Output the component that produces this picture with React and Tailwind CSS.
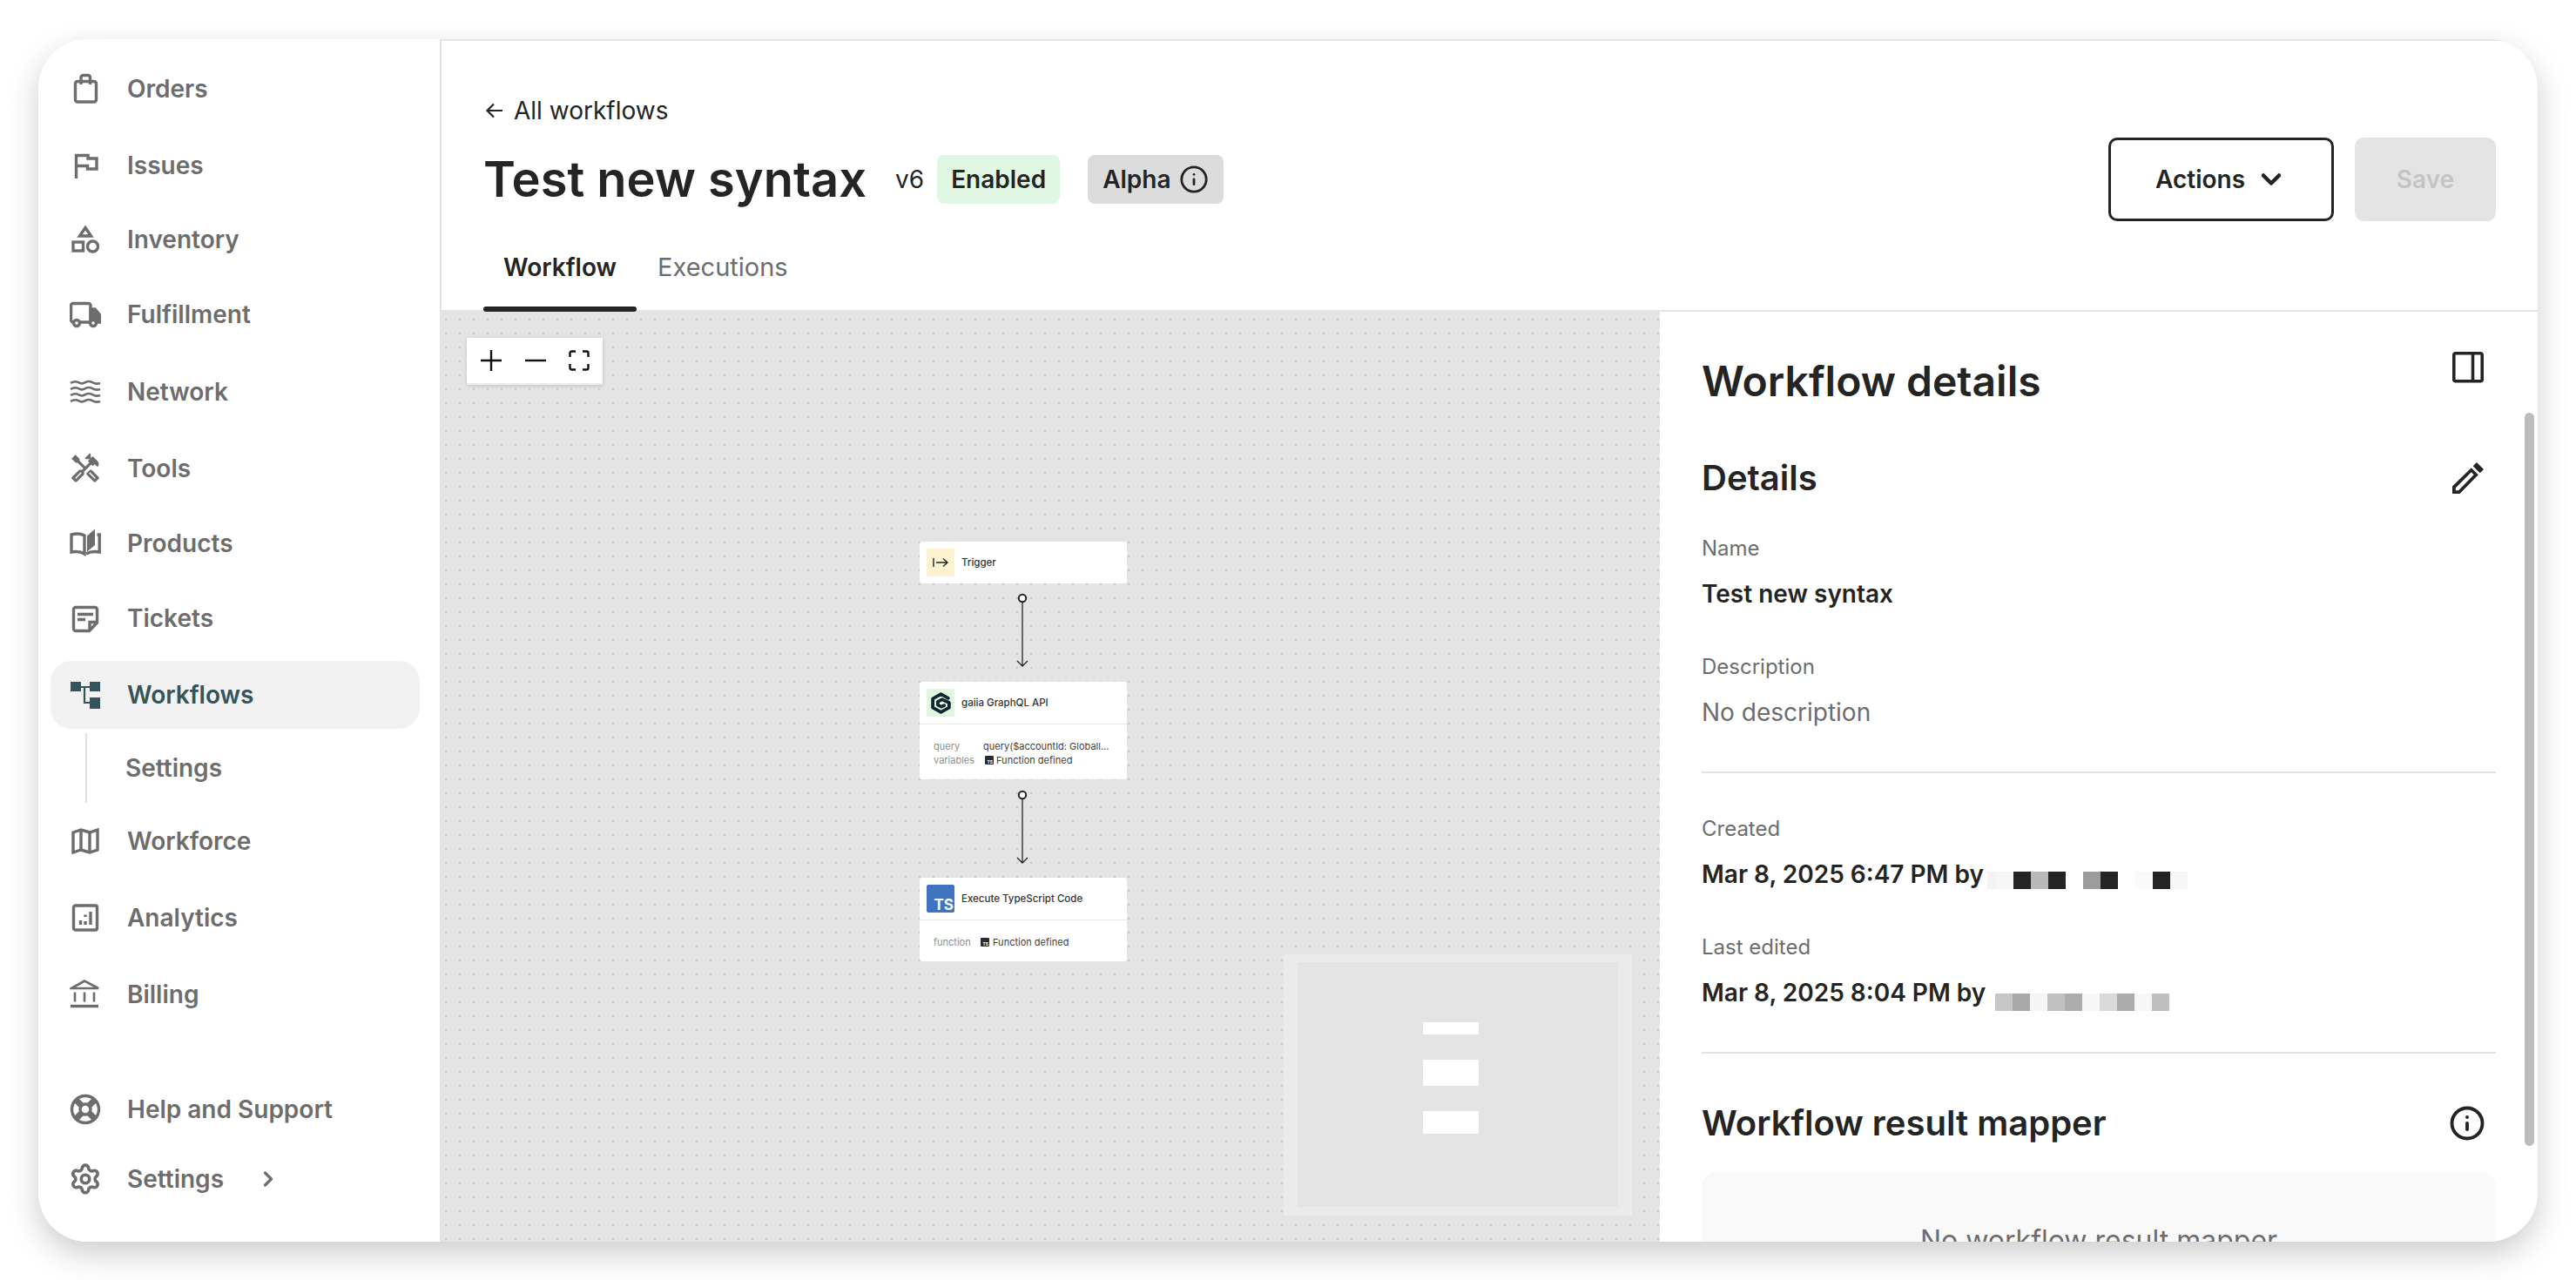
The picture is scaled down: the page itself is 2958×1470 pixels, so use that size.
import React from "react";
import { Settings as Gear, ChevronRight, ChevronDown, Info } from "lucide-react";
import { MdOutlineHandyman } from "react-icons/md";

const G = "#6d6d6d";
const S = ({ children, color = G }) => (
  <svg width="36" height="36" viewBox="0 0 36 36" fill="none" stroke={color} strokeWidth="3.400" className="shrink-0">
    {children}
  </svg>
);

const icons = {
  orders: (
    <S>
      <rect x="6.500" y="9.500" width="24" height="23.500" rx="2.500" />
      <path d="M13 13V5a2.500 2.500 0 0 1 2.500-2.500h5.500A2.500 2.500 0 0 1 23.500 5v8" />
    </S>
  ),
  issues: (
    <S>
      <path d="M7.500 33V6.500H21V10H31V22H20.500V18.500H7.500" />
    </S>
  ),
  inventory: (
    <S>
      <path d="M18 4.500 24.500 14h-13Z" />
      <rect x="4" y="21" width="11.500" height="10" />
      <circle cx="26.500" cy="26" r="6" />
    </S>
  ),
  truck: (
    <S>
      <path d="M5 27H4A2.500 2.500 0 0 1 1.500 24.500V8A2.500 2.500 0 0 1 4 5.500H21.500A2.500 2.500 0 0 1 24 8V27H11" />
      <path d="M24 12h5l5.500 6.500V27h-2.500H24Z" fill={G} />
      <circle cx="8" cy="28" r="3.500" fill="#fff" />
      <circle cx="27" cy="28" r="3.500" fill="#fff" />
    </S>
  ),
  network: (
    <S>
      {[8, 15, 22, 29].map((y) => (
        <path key={y} strokeWidth="2.600" d={`M1 ${y}c4-2.500 6-2.500 9-.8s5 1.800 8 0 5-1.700 8 0 5 2 9 .8`} />
      ))}
    </S>
  ),
  tools: <MdOutlineHandyman size={38} color={G} className="shrink-0 -mx-px" />,
  products: (
    <S>
      <path d="M2 28V8C7 6.500 13 6.800 17 9V30C13 27.500 7 27 2 28Z" />
      <path d="M20 9.500 29 1.500V20L20 27.500Z" fill={G} stroke="none" />
      <path d="M31.500 8H34.200V28C29 27 23 27.500 19 30" />
    </S>
  ),
  tickets: (
    <S>
      <path d="M7 5.500H29A2.500 2.500 0 0 1 31.500 8V23L22.500 32.500H7A2.500 2.500 0 0 1 4.500 30V8A2.500 2.500 0 0 1 7 5.500Z" />
      <path d="M9 13.500H27M9 19.500H18M31 22.500H23V32" />
    </S>
  ),
  workflows: (
    <S color="#34545c">
      <path fill="#34545c" stroke="none" d="M1 3h12v11H1zM23 3h12v11H23zM23 21h12v13H23z" />
      <path strokeWidth="2.200" d="M13 9H23M17 9V27H23" />
    </S>
  ),
  workforce: (
    <S>
      <path d="M4 8 13 5l10 3 9-3V28l-9 3-10-3-9 3Z" />
      <path d="M13 5V28M23 8V31" />
    </S>
  ),
  analytics: (
    <S>
      <rect x="4.500" y="4" width="27" height="28" rx="2" />
      <path d="M12.500 21v5M18 14.500V17M18 22v4M24 11v15" />
    </S>
  ),
  billing: (
    <S>
      <path strokeWidth="2.600" d="M2 11 17 2.500 33 11ZM6 15.500v11M17 15.500v11M28 15.500v11" />
      <path d="M1 31.500H33" />
    </S>
  ),
  help: (
    <S>
      <circle cx="18" cy="18" r="15.500" />
      <circle cx="18" cy="18" r="6" />
      <path strokeWidth="7" d="M7 7 13.500 13.500M29 7 22.500 13.500M7 29 13.500 22.500M29 29 22.500 22.500" />
    </S>
  ),
  settings: <Gear size={38} strokeWidth={2.300} color={G} className="shrink-0 -mx-px" />,
};

function NavRow({ icon, label, cls, active, extra }) {
  return (
    <div className={`flex items-center gap-[30px] pl-[22px] ${cls} ${active ? "rounded-[24px] bg-[#f2f2f2] text-[#34545c]" : "text-[#6d6d6d]"}`}>
      {icons[icon]}
      <span className="text-[28px] font-semibold leading-none">{label}</span>
      {extra}
    </div>
  );
}

function Sidebar() {
  return (
    <aside className="flex w-[461px] shrink-0 flex-col pl-[14px] pr-[23px] pt-[13px] pb-[32px]">
      <NavRow icon="orders" label="Orders" cls="h-[88px]" />
      <NavRow icon="issues" label="Issues" cls="h-[87px]" />
      <NavRow icon="inventory" label="Inventory" cls="h-[83px]" />
      <NavRow icon="truck" label="Fulfillment" cls="h-[90px]" />
      <NavRow icon="network" label="Network" cls="h-[87px]" />
      <NavRow icon="tools" label="Tools" cls="h-[90px]" />
      <NavRow icon="products" label="Products" cls="h-[82px]" />
      <NavRow icon="tickets" label="Tickets" cls="h-[90px]" />
      <NavRow icon="workflows" label="Workflows" cls="mt-[4px] h-[78px]" active />
      <div className="mb-[2px] ml-[40px] mt-[5px] flex h-[80px] items-center border-l-2 border-[#e0e0e0] pl-[44px]">
        <span className="text-[28px] font-semibold leading-none text-[#6d6d6d]">Settings</span>
      </div>
      <NavRow icon="workforce" label="Workforce" cls="h-[84px]" />
      <NavRow icon="analytics" label="Analytics" cls="h-[92px]" />
      <NavRow icon="billing" label="Billing" cls="h-[84px]" />
      <div className="flex-1" />
      <NavRow icon="help" label="Help and Support" cls="h-[80px]" />
      <NavRow
        icon="settings"
        label="Settings"
        cls="h-[80px]"
        extra={<ChevronRight size={28} strokeWidth={2.800} className="ml-[7px]" />}
      />
    </aside>
  );
}

function Header() {
  return (
    <header className="h-[311px] shrink-0 border-b-2 border-[#e4e4e4] pl-[48px] pr-[48px] pt-[60px] text-[#242424]">
      <div className="flex h-[40px] items-center text-[28px] leading-none">
        <svg width="24" height="24" viewBox="0 0 24 24" fill="none" stroke="#242424" strokeWidth="2.200" className="ml-px mr-[10px]">
          <path d="M21 12H4M11 4.500 3.500 12l7.500 7.500" />
        </svg>
        All workflows
      </div>
      <div className="mt-[11px] flex h-[96px] items-center">
        <h1 className="text-[56px] font-semibold leading-none">Test new syntax</h1>
        <span className="ml-[33px] text-[28px] leading-none">v6</span>
        <span className="ml-[15px] flex h-[56px] items-center rounded-[8px] bg-[#dff7e3] px-[16px] text-[28px] font-semibold">Enabled</span>
        <span className="ml-[32px] flex h-[56px] items-center gap-[9px] rounded-[8px] bg-[#dcdcdc] px-[17px] text-[28px] font-semibold">
          Alpha <Info size={34} strokeWidth={2} />
        </span>
        <button className="ml-auto flex h-[96px] w-[259px] items-center justify-center gap-[12px] rounded-[10px] border-[3px] border-[#242424] text-[28px] font-semibold">
          Actions <ChevronDown size={36} strokeWidth={3} />
        </button>
        <button className="ml-[24px] h-[96px] w-[162px] rounded-[10px] bg-[#e4e4e4] text-[28px] font-semibold text-[#c4c4c4]">Save</button>
      </div>
      <div className="-mb-[2px] flex">
        <div className="flex flex-col px-[23px] pt-[33px]">
          <span className="h-[40px] text-[28px] font-semibold leading-[40px]">Workflow</span>
          <div className="-mx-[23px] mt-[25px] h-[6px] rounded-full bg-[#242424]" />
        </div>
        <div className="px-[24px] pt-[33px]">
          <span className="block h-[40px] text-[29px] leading-[40px] text-[#6d6d6d]">Executions</span>
        </div>
      </div>
    </header>
  );
}

const TsMini = () => (
  <span className="relative block h-[10px] w-[10px] shrink-0 rounded-[1px] bg-[#2b2b2b]">
    <span className="absolute bottom-0 right-[1px] text-[5px] font-bold leading-[6px] text-white">TS</span>
  </span>
);

function Connector({ top }) {
  return (
    <svg className="absolute left-[660px]" style={{ top }} width="14" height="86" viewBox="0 0 14 86" fill="none" stroke="#242424">
      <circle cx="7" cy="6" r="4.200" strokeWidth="2" fill="#fff" />
      <path d="M7 10V84M1 78l6 6 6-6" strokeWidth="1.300" />
    </svg>
  );
}

function NodeHead({ icon, label }) {
  return (
    <div className="flex h-[48px] items-center gap-[8px] px-[8px]">
      {icon}
      <span className="pt-[1px] text-[11.500px] font-medium leading-none text-[#333]">{label}</span>
    </div>
  );
}

function Canvas() {
  return (
    <section className="relative w-[1399px] shrink-0 overflow-hidden bg-[#e4e4e4] bg-[radial-gradient(circle,#cbcbcb_0.7px,transparent_1px)] bg-[length:16px_16px] bg-[position:-3px_1px]">
      <div className="absolute left-[29px] top-[30px] flex h-[54px] w-[156px] items-center justify-around border-b-2 border-[#ececec] bg-white px-[2px] shadow-[0_1px_4px_rgba(0,0,0,0.15)]">
        <svg width="26" height="26" viewBox="0 0 26 26" stroke="#111" strokeWidth="2.400"><path d="M13 1V25M1 13H25" /></svg>
        <svg width="26" height="26" viewBox="0 0 26 26" stroke="#111" strokeWidth="2.400"><path d="M1 13H25" /></svg>
        <svg width="24" height="24" viewBox="0 0 24 24" fill="none" stroke="#111" strokeWidth="2.400"><path d="M1.500 8V3.500a2 2 0 0 1 2-2H8M16 1.500h4.500a2 2 0 0 1 2 2V8M22.500 16v4.500a2 2 0 0 1-2 2H16M8 22.500H3.500a2 2 0 0 1-2-2V16" /></svg>
      </div>

      <div className="absolute left-[549px] top-[264px] h-[48px] w-[238px] rounded-[3px] bg-white">
        <NodeHead
          label="Trigger"
          icon={
            <span className="flex h-[32px] w-[32px] items-center justify-center rounded-[2px] bg-[#fdf3d0]">
              <svg width="18" height="12" viewBox="0 0 18 12" fill="none" stroke="#222" strokeWidth="1.400"><path d="M1 1V11M4 6H17M12 1.500 17 6l-5 4.500" /></svg>
            </span>
          }
        />
      </div>
      <Connector top="323px" />

      <div className="absolute left-[549px] top-[425px] h-[112px] w-[238px] rounded-[3px] bg-white">
        <NodeHead
          label="gaiia GraphQL API"
          icon={
            <span className="flex h-[32px] w-[32px] items-center justify-center rounded-[2px] bg-[#dff7e3]">
              <svg width="25" height="25" viewBox="0 0 24 24" fill="none" stroke="#10272f" strokeWidth="3.600" strokeLinecap="round" strokeLinejoin="round">
                <path d="M20 6.500 12 2 3 7v10l9 5 9-5v-5.500L13 8l-4.500 2.500v3.500l4 2 3-1.500" />
              </svg>
            </span>
          }
        />
        <div className="flex flex-col border-t border-[#e8e8e8] pl-[16px] pt-[17px] text-[11px] leading-[16px]">
          <div className="flex">
            <span className="w-[57px] text-[#8d8d8d]">query</span>
            <span className="text-[#3e3e3e]">query($accountId: Globall...</span>
          </div>
          <div className="flex items-center">
            <span className="w-[59px] text-[#8d8d8d]">variables</span>
            <TsMini />
            <span className="ml-[3px] text-[#3e3e3e]">Function defined</span>
          </div>
        </div>
      </div>
      <Connector top="549px" />

      <div className="absolute left-[549px] top-[650px] h-[96px] w-[238px] rounded-[3px] bg-white">
        <NodeHead
          label="Execute TypeScript Code"
          icon={
            <span className="relative block h-[32px] w-[32px] rounded-[2px] bg-[#4273bf]">
              <span className="absolute bottom-0 right-[1px] text-[17px] font-bold leading-[17px] text-white">TS</span>
            </span>
          }
        />
        <div className="flex h-[48px] items-center border-t border-[#e8e8e8] pl-[16px] pt-[2px] text-[11px] leading-[16px]">
          <span className="w-[54px] text-[#8d8d8d]">function</span>
          <TsMini />
          <span className="ml-[4px] text-[#3e3e3e]">Function defined</span>
        </div>
      </div>

      <div className="absolute left-[967px] top-[738px] flex h-[300px] w-[400px] flex-col items-center border-x-[16px] border-b-[10px] border-t-[9px] border-[#ebebeb] bg-[#e4e4e4] pr-[16px] pt-[69px]">
        <div className="h-[14px] w-[64px] rounded-[1px] bg-white" />
        <div className="mt-[29px] h-[30px] w-[64px] rounded-[1px] bg-white" />
        <div className="mt-[29px] h-[26px] w-[64px] rounded-[1px] bg-white" />
      </div>
    </section>
  );
}

const row1 = ["#f3f3f3", "#f7f7f7", "#242424", "#b8b8b8", "#242424", "#ffffff", "#9c9c9c", "#242424", "#ffffff", "#fafafa", "#242424", "#f7f7f7"];
const row2 = ["#c6c6c6", "#a8a8a8", "#f5f5f5", "#c0c0c0", "#adadad", "#f7f7f7", "#dadada", "#ababab", "#f7f7f7", "#bfbfbf"];

function Pixels({ colors, cls, half }) {
  return (
    <span className={`flex h-[20px] ${cls}`}>
      {colors.map((c, i) => (
        <span key={i} className={`h-[20px] ${half && i === 0 ? "w-[10px]" : "w-[20px]"}`} style={{ background: c }} />
      ))}
    </span>
  );
}

function Panel() {
  return (
    <section className="relative flex-1 overflow-hidden px-[48px] pt-[50px] text-[#242424]">
      <div className="absolute right-[4px] top-[116px] h-[842px] w-[11px] rounded-full bg-[#bdbdbd]" />
      <div className="flex h-[60px] items-center justify-between pr-[14px]">
        <h2 className="text-[48px] font-semibold leading-none">Workflow details</h2>
        <svg width="36" height="36" viewBox="0 0 36 36" fill="none" stroke="#242424" strokeWidth="3.600" className="-mt-[32px]">
          <rect x="1.800" y="1.800" width="32.400" height="32" rx="2" />
          <path d="M23.500 2V33" />
        </svg>
      </div>
      <div className="mt-[57px] flex h-[48px] items-center justify-between pr-[14px]">
        <h3 className="text-[40px] font-semibold leading-none">Details</h3>
        <svg width="36" height="36" viewBox="0 0 38 38" fill="#242424">
          <path d="M29.500 0 38 8.500 33.500 13 25 4.500Z" />
          <path fillRule="evenodd" d="M23 6.500 31.500 15 9 38H0V29ZM23 12 4 31V34H7.500L26 15Z" />
        </svg>
      </div>
      <div className="mt-[41px] h-[32px] text-[24px] leading-[32px] text-[#6d6d6d]">Name</div>
      <div className="mt-[16px] h-[40px] text-[28px] font-semibold leading-[40px]">Test new syntax</div>
      <div className="mt-[48px] h-[32px] text-[24px] leading-[32px] text-[#6d6d6d]">Description</div>
      <div className="mt-[16px] h-[40px] text-[28px] leading-[40px] text-[#6d6d6d]">No description</div>
      <div className="mt-[48px] h-[2px] bg-[#e4e4e4]" />
      <div className="mt-[48px] h-[32px] text-[24px] leading-[32px] text-[#6d6d6d]">Created</div>
      <div className="mt-[16px] flex h-[40px] text-[28px] font-semibold leading-[40px]">
        Mar 8, 2025 6:47 PM by
        <Pixels colors={row1} half cls="ml-[4px] mt-[17px]" />
      </div>
      <div className="mt-[48px] h-[32px] text-[24px] leading-[32px] text-[#6d6d6d]">Last edited</div>
      <div className="mt-[16px] flex h-[40px] text-[28px] font-semibold leading-[40px]">
        Mar 8, 2025 8:04 PM by
        <Pixels colors={row2} cls="ml-[11px] mt-[21px]" />
      </div>
      <div className="mt-[48px] h-[2px] bg-[#e4e4e4]" />
      <div className="mt-[50px] flex h-[60px] items-center justify-between pr-[12px]">
        <h3 className="text-[40px] font-semibold leading-none">Workflow result mapper</h3>
        <Info size={42} strokeWidth={2.200} />
      </div>
      <div className="mt-[26px] h-[200px] rounded-[16px] bg-[#f9f9f9] pt-[59px] text-center text-[32px] leading-[40px] text-[#6d6d6d]">
        No workflow result mapper
      </div>
    </section>
  );
}

export default function App() {
  return (
    <div className="h-screen w-full overflow-hidden bg-white pl-[44px] pt-[45px] font-['Inter',sans-serif]">
      <div className="flex h-[1381px] w-[2870px] overflow-hidden rounded-[56px] bg-white shadow-[0_14px_36px_rgba(0,0,0,0.2)]">
        <Sidebar />
        <main className="flex min-w-0 flex-1 flex-col border-l-2 border-t-2 border-[#e4e4e4]">
          <Header />
          <div className="flex min-h-0 flex-1">
            <Canvas />
            <Panel />
          </div>
        </main>
      </div>
    </div>
  );
}
